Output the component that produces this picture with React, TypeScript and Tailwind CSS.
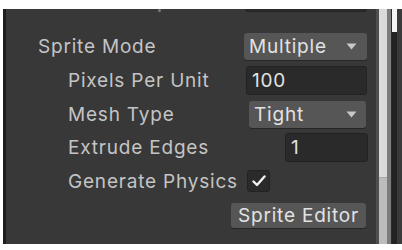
import React from "react";

const font = { fontFamily: "Inter, 'Noto Sans', sans-serif" };

function Arrow() {
  return (
    <svg width="11" height="7" viewBox="0 0 11 7" className="ml-auto flex-none">
      <path d="M0.5 0.5 L10.5 0.5 L5.5 6.5 Z" fill="#c8c8c8" />
    </svg>
  );
}

export default function App() {
  return (
    <div className="w-[402px] h-[250px] bg-white flex flex-col overflow-hidden" style={font}>
      <div className="h-[9px] flex-none bg-white" />
      <div className="flex h-[235px] flex-none">
        <div className="w-[3px] bg-white" />
        <div className="w-[3px] bg-[#1e1e1e]" />
        {/* panel */}
        <div className="flex-1 bg-[#383838] flex flex-col text-[#c4c4c4] text-[19px] tracking-[0.8px] leading-none">
          {/* partial previous row */}
          <div className="flex h-[3px]">
            <div className="ml-[152px] w-[3px] h-[3px] bg-[#7a7a7a] rounded-full" />
            <div className="ml-[84px] w-[122px] h-[3px] bg-[#2a2a2a] rounded-b-[3px] border-b border-x border-[#262626]" />
          </div>
          {/* Sprite Mode */}
          <div className="flex items-center h-[27px] mt-[21px] pr-[9px]">
            <span className="pl-[32px] whitespace-nowrap">Sprite Mode</span>
            <div className="ml-auto w-[123px] h-full bg-[#565656] rounded-[3px] flex items-center pl-[5px] pr-[10px] text-[#e2e2e2] shadow-[0_1px_0_#262626]">
              <span>Multiple</span>
              <Arrow />
            </div>
          </div>
          {/* Pixels Per Unit */}
          <div className="flex items-center h-[29px] mt-[6px] pr-[9px]">
            <span className="pl-[62px] whitespace-nowrap">Pixels Per Unit</span>
            <div className="ml-auto w-[121px] h-full bg-[#2a2a2a] border border-[#222] rounded-[3px] flex items-center pl-[5px] text-[#e2e2e2]">
              100
            </div>
          </div>
          {/* Mesh Type */}
          <div className="flex items-center h-[27px] mt-[6px] pr-[10px]">
            <span className="pl-[62px] whitespace-nowrap">Mesh Type</span>
            <div className="ml-auto w-[117px] h-full bg-[#565656] rounded-[3px] flex items-center pl-[5px] pr-[9px] text-[#e2e2e2] shadow-[0_1px_0_#262626]">
              <span>Tight</span>
              <Arrow />
            </div>
          </div>
          {/* Extrude Edges */}
          <div className="flex items-center h-[29px] mt-[5px] pr-[8px]">
            <span className="pl-[62px] whitespace-nowrap">Extrude Edges</span>
            <div className="ml-auto w-[83px] h-full bg-[#2a2a2a] border border-[#222] rounded-[3px] flex items-center pl-[5px] text-[#e2e2e2]">
              1
            </div>
          </div>
          {/* Generate Physics */}
          <div className="flex items-center h-[22px] mt-[8px]">
            <span className="pl-[62px] w-[241px] flex-none whitespace-nowrap">Generate Physics</span>
            <div className="w-[23px] h-[22px] bg-[#2a2a2a] border border-[#222] rounded-[3px] flex items-center justify-center">
              <svg width="14" height="12" viewBox="0 0 14 12">
                <path d="M1.5 6.5 L5 10 L12.5 1.5" stroke="#f2f2f2" strokeWidth="2.4" fill="none" strokeLinecap="round" strokeLinejoin="round" />
              </svg>
            </div>
          </div>
          {/* Sprite Editor */}
          <div className="flex items-center h-[25px] mt-[11px] pr-[10px]">
            <div className="ml-auto w-[135px] h-full bg-[#565656] rounded-[3px] flex items-center justify-center text-[#e2e2e2] shadow-[0_1px_0_#262626]">
              Sprite Editor
            </div>
          </div>
        </div>
        {/* scrollbar columns */}
        <div className="w-[3px] bg-[#4e4e4e]" />
        <div className="w-[8px] flex flex-col">
          <div className="h-[168px] bg-[#dadada]" />
          <div className="flex-1 bg-[#bcbcbc] border-t border-[#a8a8a8]" />
        </div>
        <div className="w-[4px] bg-[#7c7c7c]" />
        <div className="w-[1px] bg-[#2a2a2a]" />
        <div className="w-[5px] flex flex-col">
          <div className="h-[23px] bg-[#f4f4f4]" />
          <div className="flex-1 bg-[#222]" />
        </div>
        <div className="w-[5px] bg-[#3a3a3a]" />
      </div>
      <div className="flex-1 bg-white" />
    </div>
  );
}
